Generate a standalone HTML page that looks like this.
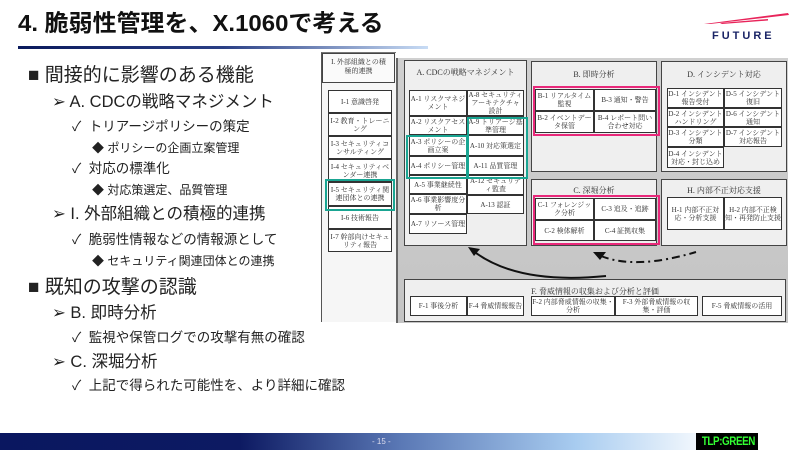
<!DOCTYPE html>
<html><head><meta charset="utf-8"><style>
*{margin:0;padding:0;box-sizing:border-box}
body{width:800px;height:450px;overflow:hidden;background:#fff;position:relative;font-family:"Liberation Sans","Noto Sans CJK JP",sans-serif;color:#222}
.a{position:absolute}
.t{position:absolute;white-space:nowrap;line-height:1}
.c{position:absolute;background:#fff;border:1px solid #333;font-family:"Liberation Serif","Noto Serif CJK SC",serif;font-size:7px;line-height:8px;text-align:center;display:flex;align-items:center;justify-content:center;color:#333;overflow:hidden}
.p{position:absolute;background:#efefef;border:1.5px solid #444;font-family:"Liberation Serif","Noto Serif CJK SC",serif;font-size:8px;text-align:center;color:#333}
</style></head><body>
<div class="t" style="left:18px;top:12px;font-size:23.5px;font-weight:bold;color:#111;transform:scaleX(1.02);transform-origin:left">4. 脆弱性管理を、X.1060で考える</div>
<div class="a" style="left:18px;top:46px;width:410px;height:3px;background:linear-gradient(90deg,#0a1a5c 0%,#2a3f85 50%,#c8dcf5 100%)"></div>
<svg class="a" style="left:700px;top:8px" width="100" height="20"><path d="M4 16 L88 5 L89 7 L10 16Z" fill="#e8245a"/><path d="M20 15 L68 11 L68 12.5 L22 16Z" fill="#e8245a"/></svg>
<div class="t" style="left:712px;top:31px;font-size:11px;font-weight:bold;color:#1a2466;letter-spacing:3px">FUTURE</div>

<div class="t" style="left:28px;top:66px;font-size:19px">■ 間接的に影響のある機能</div>
<div class="t" style="left:52px;top:94px;font-size:16.5px">➢ A. CDCの戦略マネジメント</div>
<div class="t" style="left:72px;top:120px;font-size:13.5px">✓&nbsp; トリアージポリシーの策定</div>
<div class="t" style="left:92px;top:142px;font-size:12px">◆ ポリシーの企画立案管理</div>
<div class="t" style="left:72px;top:162px;font-size:13.5px">✓&nbsp; 対応の標準化</div>
<div class="t" style="left:92px;top:184px;font-size:12px">◆ 対応策選定、品質管理</div>
<div class="t" style="left:52px;top:206px;font-size:16.5px">➢ I. 外部組織との積極的連携</div>
<div class="t" style="left:72px;top:233px;font-size:13.5px">✓&nbsp; 脆弱性情報などの情報源として</div>
<div class="t" style="left:92px;top:255px;font-size:12px">◆ セキュリティ関連団体との連携</div>
<div class="t" style="left:28px;top:278px;font-size:19px">■ 既知の攻撃の認識</div>
<div class="t" style="left:52px;top:305px;font-size:16.5px">➢ B. 即時分析</div>
<div class="t" style="left:72px;top:331px;font-size:13.5px">✓&nbsp; 監視や保管ログでの攻撃有無の確認</div>
<div class="t" style="left:52px;top:354px;font-size:16.5px">➢ C. 深堀分析</div>
<div class="t" style="left:72px;top:379px;font-size:13.5px">✓&nbsp; 上記で得られた可能性を、より詳細に確認</div>

<!-- diagram -->
<div class="a" style="left:321px;top:52px;width:75px;height:270px;background:#f6f6f6;border-left:1px solid #555;border-top:1px solid #777"></div>
<div class="p" style="left:322px;top:53px;width:73px;height:30px;font-size:7px;line-height:9px;padding-top:4px;border-width:1px;background:#fafafa">I. 外部組織との積<br>極的連携</div>
<div class="a" style="left:396px;top:58px;width:392px;height:265px;background:linear-gradient(180deg,#d0d0d0,#c4c4c4);border-left:2px solid #666"></div>
<div class="c" style="left:328px;top:90px;width:64px;height:23px">I-1 意識啓発</div>
<div class="c" style="left:328px;top:113px;width:64px;height:23px">I-2 教育・トレーニング</div>
<div class="c" style="left:328px;top:136px;width:64px;height:23px">I-3 セキュリティコンサルティング</div>
<div class="c" style="left:328px;top:159px;width:64px;height:23px">I-4 セキュリティベンダー連携</div>
<div class="c" style="left:328px;top:182px;width:64px;height:24px">I-5 セキュリティ関連団体との連携</div>
<div class="c" style="left:328px;top:206px;width:64px;height:23px">I-6 技術報告</div>
<div class="c" style="left:328px;top:229px;width:64px;height:23px">I-7 幹部向けセキュリティ報告</div>
<div class="a" style="left:325px;top:179px;width:70px;height:32px;border:2px solid #1aa592"></div>

<div class="p" style="left:404px;top:60px;width:123px;height:186px;padding-top:6px">A. CDCの戦略マネジメント</div>
<div class="p" style="left:531px;top:61px;width:126px;height:111px;padding-top:7px">B. 即時分析</div>
<div class="p" style="left:661px;top:61px;width:126px;height:111px;padding-top:7px">D. インシデント対応</div>
<div class="p" style="left:531px;top:179px;width:126px;height:67px;padding-top:5px">C. 深堀分析</div>
<div class="p" style="left:661px;top:179px;width:126px;height:67px;padding-top:5px">H. 内部不正対応支援</div>
<div class="p" style="left:404px;top:279px;width:382px;height:43px;padding-top:6px">F. 脅威情報の収集および分析と評価</div>

<div class="c" style="left:409px;top:90px;width:58px;height:26px">A-1 リスクマネジメント</div>
<div class="c" style="left:467px;top:90px;width:57px;height:26px">A-8 セキュリティアーキテクチャ設計</div>
<div class="c" style="left:409px;top:116px;width:58px;height:19px">A-2 リスクアセスメント</div>
<div class="c" style="left:467px;top:116px;width:57px;height:19px">A-9 トリアージ基準管理</div>
<div class="c" style="left:409px;top:135px;width:58px;height:21px">A-3 ポリシーの企画立案</div>
<div class="c" style="left:467px;top:135px;width:57px;height:21px">A-10 対応策選定</div>
<div class="c" style="left:409px;top:156px;width:58px;height:19px">A-4 ポリシー管理</div>
<div class="c" style="left:467px;top:156px;width:57px;height:19px">A-11 品質管理</div>
<div class="c" style="left:409px;top:175px;width:58px;height:19px">A-5 事業継続性</div>
<div class="c" style="left:467px;top:175px;width:57px;height:20px">A-12 セキュリティ監査</div>
<div class="c" style="left:409px;top:194px;width:58px;height:20px">A-6 事業影響度分析</div>
<div class="c" style="left:467px;top:195px;width:57px;height:19px">A-13 認証</div>
<div class="c" style="left:409px;top:214px;width:58px;height:20px">A-7 リソース管理</div>
<div class="a" style="left:467px;top:117px;width:61px;height:62px;border:2px solid #1aa592"></div>
<div class="a" style="left:406px;top:135px;width:62px;height:44px;border:2px solid #1aa592"></div>

<div class="c" style="left:535px;top:89px;width:59px;height:22px">B-1 リアルタイム監視</div>
<div class="c" style="left:594px;top:89px;width:62px;height:22px">B-3 通知・警告</div>
<div class="c" style="left:535px;top:111px;width:59px;height:22px">B-2 イベントデータ保管</div>
<div class="c" style="left:594px;top:111px;width:62px;height:22px">B-4 レポート問い合わせ対応</div>
<div class="a" style="left:533px;top:86px;width:127px;height:50px;border:2px solid #e8287a"></div>

<div class="c" style="left:667px;top:88px;width:57px;height:20px">D-1 インシデント報告受付</div>
<div class="c" style="left:724px;top:88px;width:58px;height:20px">D-5 インシデント復旧</div>
<div class="c" style="left:667px;top:108px;width:57px;height:19px">D-2 インシデントハンドリング</div>
<div class="c" style="left:724px;top:108px;width:58px;height:19px">D-6 インシデント通知</div>
<div class="c" style="left:667px;top:127px;width:57px;height:20px">D-3 インシデント分類</div>
<div class="c" style="left:724px;top:127px;width:58px;height:20px">D-7 インシデント対応報告</div>
<div class="c" style="left:667px;top:147px;width:57px;height:21px">D-4 インシデント対応・封じ込め</div>

<div class="c" style="left:535px;top:198px;width:59px;height:22px">C-1 フォレンジック分析</div>
<div class="c" style="left:594px;top:198px;width:62px;height:22px">C-3 追及・追跡</div>
<div class="c" style="left:535px;top:220px;width:59px;height:21px">C-2 検体解析</div>
<div class="c" style="left:594px;top:220px;width:62px;height:21px">C-4 証拠収集</div>
<div class="a" style="left:533px;top:195px;width:127px;height:50px;border:2px solid #e8287a"></div>

<div class="c" style="left:667px;top:197px;width:57px;height:33px">H-1 内部不正対応・分析支援</div>
<div class="c" style="left:724px;top:197px;width:58px;height:33px">H-2 内部不正検知・再発防止支援</div>

<div class="c" style="left:410px;top:296px;width:57px;height:20px">F-1 事後分析</div>
<div class="c" style="left:467px;top:296px;width:57px;height:20px">F-4 脅威情報報告</div>
<div class="c" style="left:531px;top:296px;width:84px;height:20px">F-2 内部脅威情報の収集・分析</div>
<div class="c" style="left:615px;top:296px;width:83px;height:20px">F-3 外部脅威情報の収集・評価</div>
<div class="c" style="left:702px;top:296px;width:80px;height:20px">F-5 脅威情報の活用</div>

<svg class="a" style="left:396px;top:240px" width="392" height="45">
<path d="M76 10 Q120 45 210 36" fill="none" stroke="#111" stroke-width="2"/>
<path d="M72 7 L84 9 L78 16Z" fill="#111"/>
<path d="M205 16 Q240 30 300 12" fill="none" stroke="#111" stroke-width="2" stroke-dasharray="8 4 2 4"/>
<path d="M197 12 L210 12 L204 20Z" fill="#111"/>
</svg>

<div class="a" style="left:0;top:433px;width:800px;height:17px;background:linear-gradient(90deg,#0a1760 0%,#0d1a62 30%,#5a78b5 50%,#a8ccf0 72%,#ffffff 90%)"></div>
<div class="t" style="left:372px;top:438px;font-size:8px;color:#dde">- 15 -</div>
<div class="a" style="left:696px;top:433px;width:62px;height:17px;background:#000;color:#33ff33;font-size:12px;font-weight:bold;text-align:center;line-height:17px;letter-spacing:-0.5px;overflow:hidden"><span style="display:inline-block;transform:scaleX(0.82)">TLP:GREEN</span></div>
</body></html>
